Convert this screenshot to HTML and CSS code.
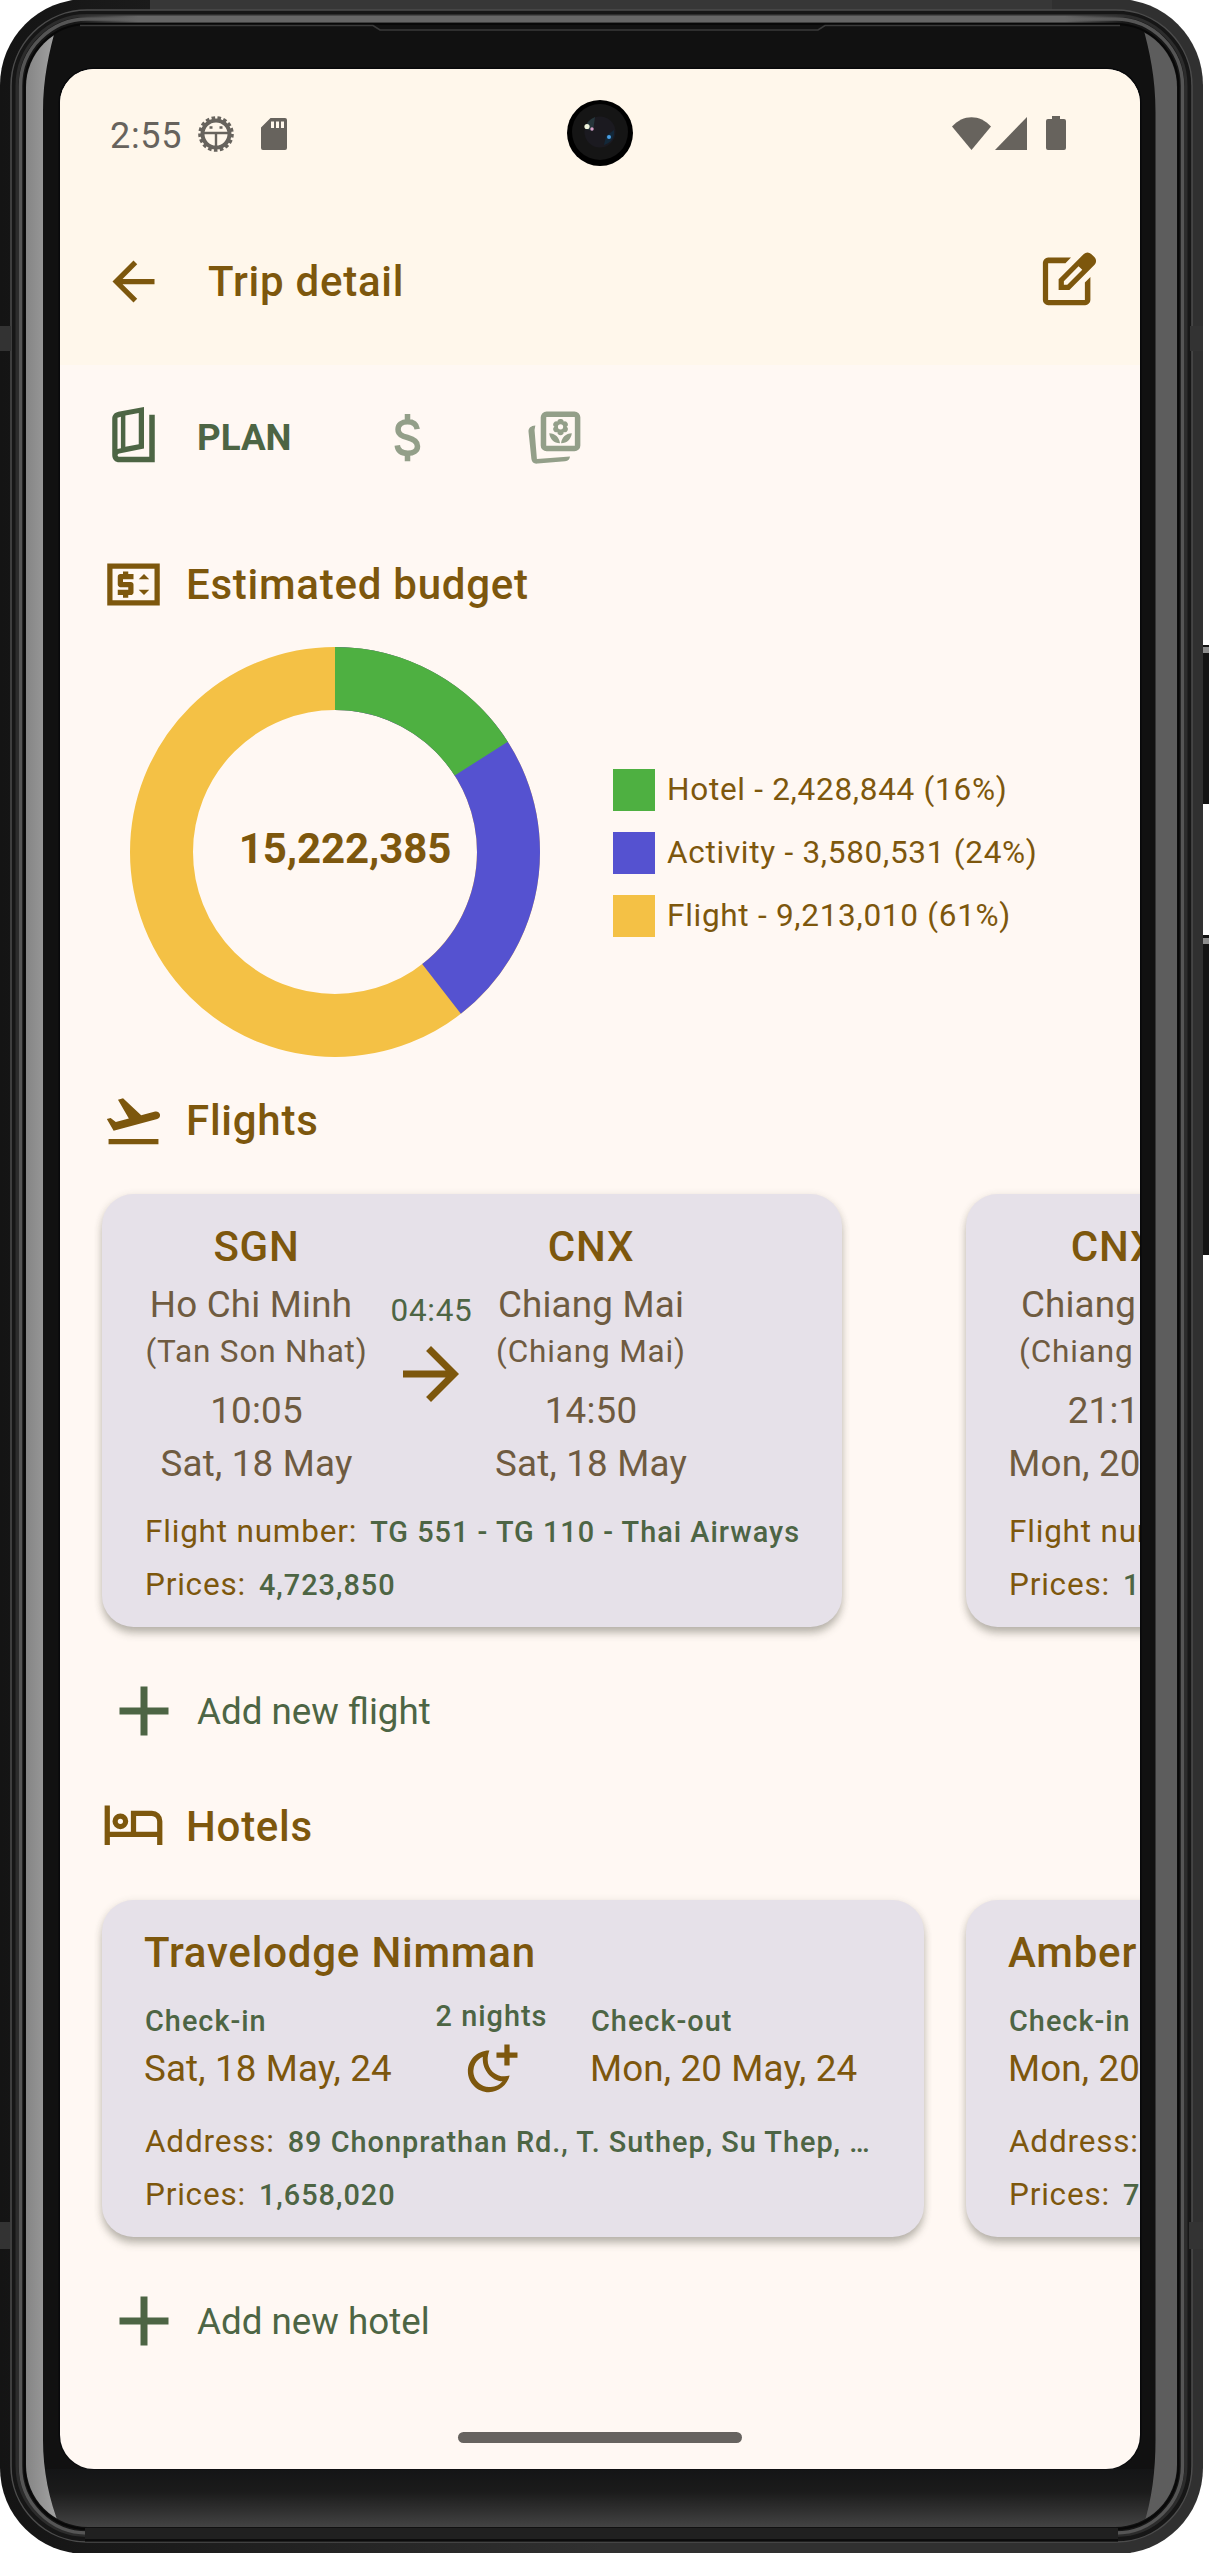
FILE: index.html
```html
<!DOCTYPE html>
<html lang="en">
<head>
<meta charset="utf-8">
<title>Trip detail</title>
<link rel="stylesheet" href="styles.css">
</head>
<body>
<div class="phone">
  <svg class="frame" viewBox="0 0 1209 2553" aria-hidden="true">
    <defs>
      <linearGradient id="chin" x1="0" y1="0" x2="0" y2="1">
        <stop offset="0" stop-color="#141516"/><stop offset=".4" stop-color="#1b1b1b"/><stop offset="1" stop-color="#434343"/>
      </linearGradient>
      <linearGradient id="shineLeft" x1="0" x2="1">
        <stop offset="0" stop-color="#858585"/><stop offset="1" stop-color="#a6a6a6"/>
      </linearGradient>
      <linearGradient id="body" x1="0" x2="1">
        <stop offset="0" stop-color="#141414"/><stop offset=".5" stop-color="#303030"/><stop offset="1" stop-color="#303030"/>
      </linearGradient>
      <linearGradient id="rim" x1="0" x2="1">
        <stop offset="0" stop-color="#666" stop-opacity="0"/><stop offset=".06" stop-color="#666"/><stop offset=".94" stop-color="#666"/><stop offset="1" stop-color="#666" stop-opacity="0"/>
      </linearGradient>
      <clipPath id="glass"><rect x="26" y="25" width="1151" height="2502" rx="62"/></clipPath>
    </defs>
    <rect x="1198" y="645" width="14" height="159" rx="3" fill="#141414"/>
    <rect x="1203" y="647" width="6" height="6" fill="#8e8e8e"/>
    <rect x="1198" y="935" width="14" height="320" rx="3" fill="#141414"/>
    <rect x="1203" y="938" width="6" height="6" fill="#8e8e8e"/>
    <rect x="0" y="-1" width="1203" height="2555" rx="86" fill="url(#body)"/>
    <path d="M150 0H1052V10H150z" fill="#373737"/>
    <rect x="11" y="10" width="1181" height="2532" rx="76" fill="#161616" stroke="#4c4c4c" stroke-width="1.5"/>
    <rect x="17" y="15.500" width="1169" height="2520" rx="70" fill="none" stroke="#2c2c2c" stroke-width="3"/>
    <rect x="20.500" y="19" width="1162" height="2514" rx="67" fill="none" stroke="#555" stroke-width="3.500"/>
    <rect x="24.500" y="24" width="1154" height="2505" rx="63" fill="#111" stroke="#080808" stroke-width="2"/>
    <rect x="75" y="15.500" width="1053" height="7" fill="url(#rim)"/>
    <path d="M85 2528H1118V2542H85z" fill="#202020"/>
    <path d="M85 2539H1118V2541H85z" fill="#0c0c0c"/>
    <g clip-path="url(#glass)">
      <rect x="26" y="2469" width="1151" height="58" fill="url(#chin)"/>
      <path d="M26 20H58C50 48 43 76 43 112V2440C43 2470 49 2500 60 2527H26z" fill="url(#shineLeft)"/>
      <path d="M1177 20H1141C1149 48 1155.500 76 1155.500 112V2440C1155.500 2470 1152 2500 1143 2527H1177z" fill="#5d5d5d"/>
    </g>
    <path d="M80 25.500H373L380 30H818L825 25.500H1120" fill="none" stroke="#3a3a3a" stroke-width="1.500"/>
    <path d="M0 326H11V351H0zM1190 326H1203V351H1190zM0 2222H10V2249H0zM1189 2222H1203V2249H1189z" fill="#333"/>
    <rect x="58.500" y="67.500" width="1083" height="2402" rx="35" fill="#08090b"/>
  </svg>

  <main class="screen">
    <header class="top">
      <div class="status">
        <span class="clock">2:55</span>
        <svg class="gear" viewBox="-18 -18 36 36" fill="none" stroke="currentColor">
          <circle r="13.500" stroke-width="4"/>
          <circle r="16" stroke-width="3.600" pathLength="51" stroke-dasharray="1.800 1.200"/>
          <path d="M-12-1H12M0 0V13" stroke-width="2.400"/>
          <path d="M-6.500-6.500h3M3.500-6.500h3" stroke-width="2.600"/>
        </svg>
        <svg class="sd" viewBox="0 0 26 32" fill="currentColor"><path fill-rule="evenodd" d="M9.500 0H24a2 2 0 0 1 2 2v28a2 2 0 0 1-2 2H2a2 2 0 0 1-2-2V9.500zM10 3.500v6.500h3V3.500zm5 0v6.500h3V3.500zm5 0v6.500h3V3.500z"/></svg>
        <svg class="camera" viewBox="0 0 66 66">
          <circle cx="33" cy="33" r="33" fill="#000"/><circle cx="33" cy="32" r="28" fill="#151515"/>
          <circle cx="33" cy="32" r="15.500" fill="#1b1a20"/>
          <path d="M18 29a16 16 0 0 1 10-12l-2 14z" fill="#26363b"/><path d="M37 45c7-2 11-8 10-15l-8 6z" fill="#132839"/>
          <circle cx="20" cy="26.500" r="2.600" fill="#eef3dc"/><circle cx="25" cy="29" r="1.700" fill="#d9a0c8"/><circle cx="42" cy="37" r="2" fill="#4a9fe6"/>
        </svg>
        <svg class="wifi" viewBox="0 0 39 33" fill="currentColor"><path d="M19.500 33 0 9.500C11-3 28-3 39 9.500z"/></svg>
        <svg class="signal" viewBox="0 0 32 33" fill="currentColor"><path d="M32 0V33H0z"/></svg>
        <svg class="battery" viewBox="0 0 20 34" fill="currentColor"><path d="M6 0h8v3h4a2 2 0 0 1 2 2v27a2 2 0 0 1-2 2H2a2 2 0 0 1-2-2V5a2 2 0 0 1 2-2h4z"/></svg>
      </div>
      <div class="toolbar">
        <svg class="icon" viewBox="0 0 24 24"><path d="M20 11H7.830l5.590-5.590L12 4l-8 8 8 8 1.410-1.410L7.830 13H20z"/></svg>
        <h1 class="title">Trip detail</h1>
        <svg class="icon" viewBox="0 0 24 24" fill-rule="evenodd"><path d="M13.700 2.900 11.600 5H5v14h14v-6.600l2.100-2.100V19a2 2 0 0 1-2 2H5a2 2 0 0 1-2-2V4.900a2 2 0 0 1 2-2z"/><path d="M9 15.200V11.100L18.600 1.500a2 2 0 0 1 2.800 0l1.300 1.300a2 2 0 0 1 0 2.800L13.100 15.200zM11 13.200h1.300l5.700-5.700-1.400-1.300L11 11.900z"/></svg>
      </div>
    </header>

    <nav class="tabs">
      <svg class="icon tab-plan" viewBox="0 0 24 24" fill-rule="evenodd"><path d="M16 1.500 6.200 3.300C4.800 3.600 3.900 4.600 3.900 6V19.800c0 1.600 1.100 2.800 2.700 2.800H20.100V4.500H18v16H6.800c-1.100 0-1.100-1.100-.2-1.300L16 17.300zM5.900 5.600 7.200 5.200v12L5.900 17.500zM8.900 4.800 14 3.800V15.700l-5.100 1z"/></svg>
      <span class="tab-label">PLAN</span>
      <svg class="icon tab-money" viewBox="0 0 24 24"><path class="line" d="M15.700 8.800C15.400 6.900 13.900 6 12 6 9.800 6 8.400 7.200 8.400 8.900c0 1.900 1.400 2.500 3.600 3.100 2.300.6 3.800 1.400 3.800 3.300 0 1.800-1.600 2.700-3.700 2.700-2.300 0-3.800-1-4-3M12 3v3M12 18v3"/></svg>
      <svg class="icon tab-photos" viewBox="0 0 24 24"><rect class="line" x="7.800" y="3.500" width="13" height="13.100" rx="1.200"/><path d="M4.700 7.800C3 7.900 2 8.800 2.100 10.200L3.200 20.600c.2 1.400 1.100 1.900 2.400 1.700L16 21.400c1.300-.1 1.800-.8 1.900-1.800L5.300 20.600 4.400 9.500z"/><path fill-rule="evenodd" d="M14.300 5.300a1.100 1.100 0 0 1 1.200 1 1.150 1.150 0 0 1 1.100 2 1.150 1.150 0 0 1-1.100 2 1.200 1.200 0 0 1-2.400 0 1.150 1.150 0 0 1-1.100-2 1.150 1.150 0 0 1 1.100-2 1.100 1.100 0 0 1 1.200-1zm0 2a1 1 0 1 0 0 2 1 1 0 0 0 0-2z"/><path d="M14.100 14.600c-.3-2.300-1.800-3.700-4.100-3.800.3 2.300 1.800 3.800 4.100 3.800zM14.500 14.600c2.300 0 3.800-1.500 4.100-3.800-2.300.1-3.800 1.500-4.100 3.800z"/></svg>
    </nav>

    <section class="budget">
      <h2 class="heading">
        <svg class="icon" viewBox="0 0 24 24" fill-rule="evenodd"><path d="M2 4h20v16H2zM4 6v12h16V6z"/><path d="M8 17h2v-1h1c.550 0 1-.450 1-1v-3c0-.550-.450-1-1-1H8v-1h4V8h-2V7H8v1H7c-.550 0-1 .450-1 1v3c0 .550.450 1 1 1h3v1H6v2h2zM14 10l2-2 2 2zM14 14l2 2 2-2z"/></svg>
        Estimated budget
      </h2>
      <div class="chart">
        <div class="donut">
          <svg viewBox="-205 -205 410 410">
            <g class="arcs">
              <circle r="173.500" pathLength="15222385" stroke="#f4c145"/>
              <circle r="173.500" pathLength="15222385" stroke="#5552d0" stroke-dasharray="6009375 15222385"/>
              <circle r="173.500" pathLength="15222385" stroke="#4eb041" stroke-dasharray="2428844 15222385"/>
            </g>
          </svg>
          <strong class="total">15,222,385</strong>
        </div>
        <ul class="legend">
          <li><i class="swatch hotel"></i>Hotel - 2,428,844 (16%)</li>
          <li><i class="swatch activity"></i>Activity - 3,580,531 (24%)</li>
          <li><i class="swatch flight"></i>Flight - 9,213,010 (61%)</li>
        </ul>
      </div>
    </section>

    <section class="group">
      <h2 class="heading">
        <svg class="icon" viewBox="0 0 24 24"><path d="M2.500 19h19v2h-19zM22.070 9.640c-.210-.8-1.040-1.280-1.840-1.060L14.920 10 8.020 3.570l-1.930.510 4.140 7.170-4.970 1.330-1.970-1.540-1.450.390 1.820 3.160.770 1.330 16.600-4.450c.810-.230 1.280-1.050 1.040-1.830z"/></svg>
        Flights
      </h2>
      <div class="cards">
        <article class="card flight-card">
          <div class="route">
            <div class="stop from">
              <b class="code">SGN</b><span class="city">Ho Chi Minh</span><span class="airport">(Tan Son Nhat)</span>
              <span class="time">10:05</span><span class="day">Sat, 18 May</span>
            </div>
            <div class="leg">
              <span class="duration">04:45</span>
              <svg class="icon big" viewBox="0 0 24 24"><path d="M12 4l-1.410 1.410L16.170 11H4v2h12.170l-5.580 5.590L12 20l8-8z"/></svg>
            </div>
            <div class="stop to">
              <b class="code">CNX</b><span class="city">Chiang Mai</span><span class="airport">(Chiang Mai)</span>
              <span class="time">14:50</span><span class="day">Sat, 18 May</span>
            </div>
          </div>
          <p class="fact"><span>Flight number:</span><b>TG 551 - TG 110 - Thai Airways</b></p>
          <p class="fact"><span>Prices:</span><b>4,723,850</b></p>
        </article>
        <article class="card flight-card">
          <div class="route">
            <div class="stop next">
              <b class="code">CNX</b><span class="city">Chiang Mai</span><span class="airport">(Chiang Mai)</span>
              <span class="time">21:10</span><span class="day">Mon, 20 May</span>
            </div>
          </div>
          <p class="fact"><span>Flight number:</span></p>
          <p class="fact"><span>Prices:</span><b>1</b></p>
        </article>
      </div>
      <div class="add">
        <svg class="icon big" viewBox="0 0 24 24"><path d="M19 13h-6v6h-2v-6H5v-2h6V5h2v6h6z"/></svg>
        Add new flight
      </div>
    </section>

    <section class="group">
      <h2 class="heading">
        <svg class="icon" viewBox="0 0 24 24" fill-rule="evenodd"><path d="M1 4h2v10h8V6h8a4 4 0 0 1 4 4v9h-2v-3H3v3H1zM13 8v6h8v-4a2 2 0 0 0-2-2zM7 7a3 3 0 1 0 0 6 3 3 0 0 0 0-6zM7 9a1 1 0 1 1 0 2 1 1 0 0 1 0-2z"/></svg>
        Hotels
      </h2>
      <div class="cards">
        <article class="card hotel-card">
          <h3 class="name">Travelodge Nimman</h3>
          <div class="stay">
            <div class="check"><b>Check-in</b><span>Sat, 18 May, 24</span></div>
            <div class="nights">
              <b>2 nights</b>
              <svg class="icon" viewBox="0 0 24 24" fill-rule="evenodd"><path d="M11.200 5.100C6.700 5 3 8.600 3 13c0 4.400 3.600 8 8 8 3.800 0 7-2.700 7.900-6.300-4.800 1.400-10.300-2.600-7.700-9.600zM8.700 7.500C8.300 12 11.500 16.600 16.200 16.900A6 6 0 0 1 11 19 6 6 0 0 1 8.700 7.500zM16.900 2.900h2v3h3v2h-3v3h-2v-3h-3v-2h3z"/></svg>
            </div>
            <div class="check"><b>Check-out</b><span>Mon, 20 May, 24</span></div>
          </div>
          <p class="fact"><span>Address:</span><b>89 Chonprathan Rd., T. Suthep, Su Thep, …</b></p>
          <p class="fact"><span>Prices:</span><b>1,658,020</b></p>
        </article>
        <article class="card hotel-card">
          <h3 class="name">Amber</h3>
          <div class="stay">
            <div class="check"><b>Check-in</b><span>Mon, 20</span></div>
          </div>
          <p class="fact"><span>Address:</span></p>
          <p class="fact"><span>Prices:</span><b>7</b></p>
        </article>
      </div>
      <div class="add">
        <svg class="icon big" viewBox="0 0 24 24"><path d="M19 13h-6v6h-2v-6H5v-2h6V5h2v6h6z"/></svg>
        Add new hotel
      </div>
    </section>

    <div class="home-bar"></div>
  </main>
</div>
</body>
</html>
```
FILE: styles.css
```css
* { box-sizing: border-box; margin: 0; padding: 0; }

:root {
  --brown: #7d570d;
  --taupe: #6f5b40;
  --green: #4d6544;
  --surface: #fff8f3;
  --grey: #67635d;
}

body {
  background: #fff;
  color: var(--brown);
  font-family: Roboto, "Liberation Sans", sans-serif;
}

svg { display: block; flex: none; }

/* Device */
.phone {
  position: relative;
  width: 1209px;
  height: 2553px;
  padding: 69px 0 0 60px;
  overflow: hidden;
}

.frame {
  position: absolute;
  inset: 0;
  width: 1209px;
  height: 2553px;
}

.screen {
  position: relative;
  display: flex;
  flex-direction: column;
  width: 1080px;
  height: 2400px;
  overflow: hidden;
  border-radius: 34px;
  background: var(--surface);
}

/* Header */
.top { background: #fff7eb; }

.status {
  display: flex;
  align-items: center;
  height: 128px;
  padding: 0 74px 0 50px;
  color: var(--grey);
}

.clock {
  width: 88px;
  padding-top: 5px;
  font-size: 36px;
  letter-spacing: .7px;
}

.gear { width: 36px; height: 36px; margin-top: 2px; }
.sd { width: 26px; height: 32px; margin-left: 27px; margin-top: 2px; }
.camera { width: 66px; height: 66px; margin: 0 319px 0 280px; }
.wifi { width: 39px; height: 33px; }
.signal { width: 32px; height: 33px; margin-left: 4px; }
.battery { width: 20px; height: 34px; margin-left: 19px; }

.toolbar {
  display: flex;
  align-items: center;
  height: 168px;
  padding: 0 42px;
}

.title {
  flex: 1;
  margin-left: 43px;
  font-size: 42px;
  font-weight: 500;
  letter-spacing: .75px;
}

.icon {
  width: 63px;
  height: 63px;
  overflow: visible;
  fill: currentColor;
}

.icon.big { width: 84px; height: 84px; }

.icon .line { fill: none; stroke: currentColor; stroke-width: 2.1; }

/* Tabs */
.tabs {
  display: flex;
  align-items: center;
  height: 142px;
  padding-left: 42px;
  color: var(--green);
}

.tab-label {
  width: 179px;
  padding: 3px 0 0 32px;
  font-size: 36.75px;
  font-weight: 700;
}

.tab-plan { margin-bottom: 3px; }
.tab-money, .tab-photos { opacity: .6; }
.tab-money { margin: 2px 0 0 32px; }
.tab-photos { margin-left: 84px; }

/* Section headings */
.heading {
  display: flex;
  align-items: center;
  gap: 21px;
  height: 63px;
  padding-left: 42px;
  font-size: 42px;
  font-weight: 500;
  letter-spacing: .75px;
}

/* Budget */
.budget { margin-top: 46px; }

.chart {
  display: flex;
  align-items: center;
  height: 410px;
  margin: 31px 0 32px;
  padding-left: 69.500px;
}

.donut {
  display: grid;
  place-items: center;
  width: 410px;
  height: 410px;
}

.donut > * { grid-area: 1 / 1; }
.donut svg { width: 410px; height: 410px; }

.arcs {
  fill: none;
  stroke-width: 63;
  transform: rotate(-90deg);
}

.total {
  padding: 0 0 7px 21px;
  font-size: 42px;
  font-weight: 700;
  letter-spacing: -.1px;
}

.legend {
  display: grid;
  gap: 21px;
  margin: 2px 0 0 73.500px;
  list-style: none;
  font-size: 31.5px;
  letter-spacing: .72px;
}

.legend li {
  display: flex;
  align-items: center;
  gap: 12px;
  height: 42px;
  line-height: 40px;
}

.swatch { width: 42px; height: 42px; }
.swatch.hotel { background: #4eb041; }
.swatch.activity { background: #5552d0; }
.swatch.flight { background: #f4c145; }

/* Card carousels */
.cards {
  display: flex;
  padding-left: 42px;
  margin: 42px 0;
}

.card {
  flex: none;
  padding: 21px 42px;
  border-radius: 31.500px;
  background: #e6e1e9;
  box-shadow: 0 7px 8px -1px rgba(60, 60, 45, .3), 0 2px 9px rgba(60, 60, 45, .14);
  white-space: nowrap;
}

.flight-card { width: 740px; height: 433px; margin-right: 124px; }
.hotel-card { width: 822px; height: 337px; margin-right: 42px; }

.route { display: flex; margin-bottom: 21px; }

.stop {
  display: flex;
  flex-direction: column;
  align-items: center;
  color: var(--taupe);
  font-size: 36.75px;
  line-height: 53px;
  letter-spacing: .2px;
}

.stop.from { width: 225px; }
.stop.to { width: 196px; }
.stop.next { width: 212px; }
.from .city { margin-right: 11px; }

.code {
  color: var(--brown);
  font-size: 42px;
  font-weight: 500;
  line-height: 63px;
  letter-spacing: .8px;
}

.airport {
  margin-bottom: 11px;
  font-size: 31.5px;
  line-height: 42px;
  letter-spacing: .85px;
}

.leg {
  display: flex;
  flex-direction: column;
  align-items: center;
  width: 124px;
  padding-top: 75px;
}

.duration {
  padding-left: 1px;
  color: var(--green);
  font-size: 31.5px;
  line-height: 42px;
  letter-spacing: .7px;
}

.fact {
  display: flex;
  align-items: baseline;
  gap: 13px;
  height: 42px;
  padding-left: 1px;
  font-size: 31.5px;
  line-height: 42px;
  letter-spacing: .8px;
}

.fact + .fact { margin-top: 11px; }

.fact b, .check b, .nights b {
  color: var(--green);
  font-size: 28.875px;
  font-weight: 500;
  line-height: 42px;
  letter-spacing: 1px;
}

.name {
  font-size: 42px;
  font-weight: 500;
  line-height: 63px;
  letter-spacing: .8px;
}

.stay { display: flex; height: 111px; margin-bottom: 26px; padding-top: 16px; }

.check, .nights { display: flex; flex-direction: column; }
.check b { padding-left: 1px; }
.check span { font-size: 36.75px; line-height: 53px; letter-spacing: .15px; }
.nights { align-items: center; width: 197px; margin-top: -5px; }
.check:first-child { width: 249px; }

/* Add rows */
.add {
  display: flex;
  align-items: center;
  gap: 11px;
  height: 84px;
  margin-bottom: 42px;
  padding-left: 42px;
  color: var(--green);
  font-size: 36.75px;
}

.group:last-of-type .add { margin-bottom: 69px; }

.home-bar {
  align-self: center;
  width: 284px;
  height: 11px;
  border-radius: 6px;
  background: #67635f;
}
```
